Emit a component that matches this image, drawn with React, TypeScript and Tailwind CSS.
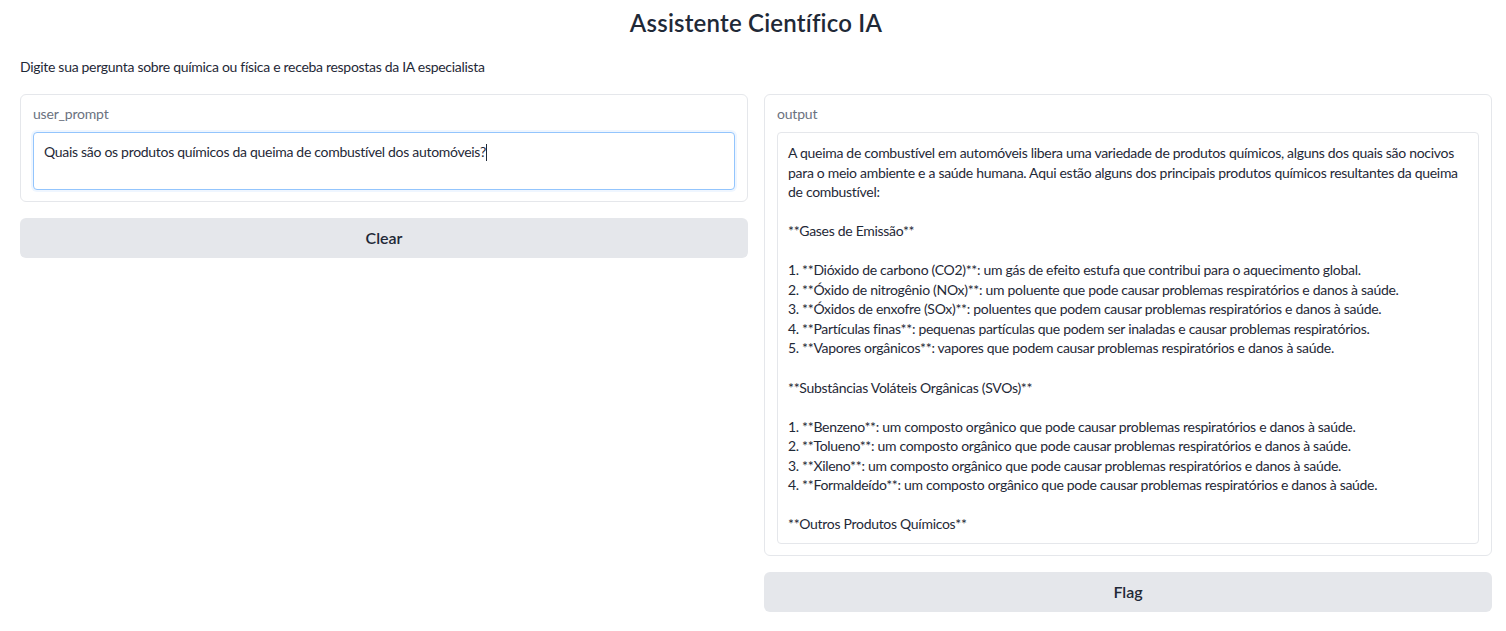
import React from "react";

const lines: string[] = [
  "A queima de combustível em automóveis libera uma variedade de produtos químicos, alguns dos quais são nocivos",
  "para o meio ambiente e a saúde humana. Aqui estão alguns dos principais produtos químicos resultantes da queima",
  "de combustível:",
  "",
  "**Gases de Emissão**",
  "",
  "1. **Dióxido de carbono (CO2)**: um gás de efeito estufa que contribui para o aquecimento global.",
  "2. **Óxido de nitrogênio (NOx)**: um poluente que pode causar problemas respiratórios e danos à saúde.",
  "3. **Óxidos de enxofre (SOx)**: poluentes que podem causar problemas respiratórios e danos à saúde.",
  "4. **Partículas finas**: pequenas partículas que podem ser inaladas e causar problemas respiratórios.",
  "5. **Vapores orgânicos**: vapores que podem causar problemas respiratórios e danos à saúde.",
  "",
  "**Substâncias Voláteis Orgânicas (SVOs)**",
  "",
  "1. **Benzeno**: um composto orgânico que pode causar problemas respiratórios e danos à saúde.",
  "2. **Tolueno**: um composto orgânico que pode causar problemas respiratórios e danos à saúde.",
  "3. **Xileno**: um composto orgânico que pode causar problemas respiratórios e danos à saúde.",
  "4. **Formaldeído**: um composto orgânico que pode causar problemas respiratórios e danos à saúde.",
  "",
  "**Outros Produtos Químicos**",
];

export default function App() {
  return (
    <div
      className="min-h-screen bg-white text-[#1f2937] pl-5 pr-[14px]"
      style={{ fontFamily: "Lato, 'Noto Sans', sans-serif" }}
    >
      <h1 className="pt-[8px] text-center text-[24px] leading-[30px] font-semibold tracking-[0.2px] text-[#1f2937]">
        Assistente Científico IA
      </h1>
      <p className="mt-[19px] text-[14px] leading-[20px] tracking-[-0.3px] text-[#1f2937]">
        Digite sua pergunta sobre química ou física e receba respostas da IA especialista
      </p>
      <div className="mt-[17px] grid grid-cols-2 gap-4">
        <div className="flex flex-col gap-4">
          <div className="rounded-[6px] border border-[#e5e7eb] bg-white px-3 pt-[9px] pb-[11px]">
            <div className="text-[14px] leading-[20px] text-[#6b7280] tracking-[-0.2px]">user_prompt</div>
            <div className="mt-[8px] h-[58px] rounded-[4px] border border-[#93c5fd] bg-white px-[10px] py-[9px] text-[14px] leading-[20px] tracking-[-0.3px] text-[#1f2937] shadow-[0_0_0_2px_#eff6ff]">
              Quais são os produtos químicos da queima de combustível dos automóveis?
              <span className="inline-block w-px h-[17px] bg-[#1f2937] align-middle -mt-[2px]" />
            </div>
          </div>
          <button className="h-[40px] rounded-[6px] bg-[#e5e7eb] text-[16px] font-semibold text-[#1f2937]">
            Clear
          </button>
        </div>
        <div className="flex flex-col gap-4">
          <div className="rounded-[6px] border border-[#e5e7eb] bg-white px-3 pt-[9px] pb-[11px]">
            <div className="text-[14px] leading-[20px] text-[#6b7280] tracking-[-0.2px]">output</div>
            <div className="mt-[8px] h-[412px] overflow-hidden rounded-[4px] border border-[#e5e7eb] bg-white px-[10px] pt-[10px] text-[14px] leading-[19.55px] tracking-[-0.3px] text-[#1f2937]">
              {lines.map((l, i) => (
                <div key={i} className="whitespace-nowrap h-[19.55px]">
                  {l}
                </div>
              ))}
            </div>
          </div>
          <button className="h-[40px] rounded-[6px] bg-[#e5e7eb] text-[16px] font-semibold text-[#1f2937]">
            Flag
          </button>
        </div>
      </div>
    </div>
  );
}
